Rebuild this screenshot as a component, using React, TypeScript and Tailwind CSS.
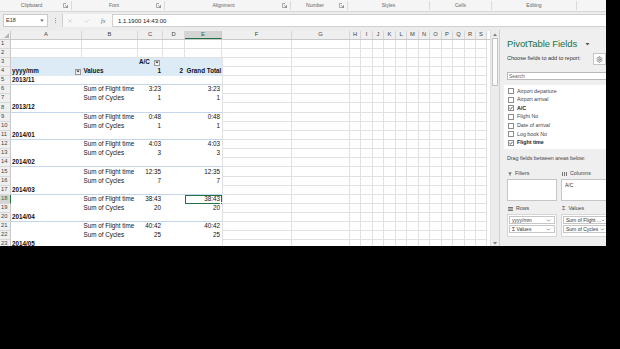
import React from "react";
import { Settings, X, Check, ChevronDown } from "lucide-react";

type Kind = "blank" | "colLabel" | "rowLabel" | "group" | "data";

interface SheetRow {
  n: number;
  kind: Kind;
  label?: string;
  c?: string;
  e?: string;
  tall?: boolean;
  selected?: boolean;
}

const COLS =
  "grid grid-cols-[11px_71px_56px_25px_22px_37px_70px_58px_11px_12px_11px_12px_11px_12px_11px_12px_11px_12px_11px_11px]";

const letters = ["A", "B", "C", "D", "E", "F", "G", "H", "I", "J", "K", "L", "M", "N", "O", "P", "Q", "R", "S"];

const rows: SheetRow[] = [
  { n: 1, kind: "blank" },
  { n: 2, kind: "blank" },
  { n: 3, kind: "colLabel" },
  { n: 4, kind: "rowLabel" },
  { n: 5, kind: "group", label: "2013/11" },
  { n: 6, kind: "data", label: "Sum of Flight time", c: "3:23", e: "3:23" },
  { n: 7, kind: "data", label: "Sum of Cycles", c: "1", e: "1" },
  { n: 8, kind: "group", label: "2013/12", tall: true },
  { n: 9, kind: "data", label: "Sum of Flight time", c: "0:48", e: "0:48" },
  { n: 10, kind: "data", label: "Sum of Cycles", c: "1", e: "1" },
  { n: 11, kind: "group", label: "2014/01" },
  { n: 12, kind: "data", label: "Sum of Flight time", c: "4:03", e: "4:03" },
  { n: 13, kind: "data", label: "Sum of Cycles", c: "3", e: "3" },
  { n: 14, kind: "group", label: "2014/02" },
  { n: 15, kind: "data", label: "Sum of Flight time", c: "12:35", e: "12:35", tall: true },
  { n: 16, kind: "data", label: "Sum of Cycles", c: "7", e: "7" },
  { n: 17, kind: "group", label: "2014/03" },
  { n: 18, kind: "data", label: "Sum of Flight time", c: "38:43", e: "38:43", selected: true },
  { n: 19, kind: "data", label: "Sum of Cycles", c: "20", e: "20" },
  { n: 20, kind: "group", label: "2014/04" },
  { n: 21, kind: "data", label: "Sum of Flight time", c: "40:42", e: "40:42" },
  { n: 22, kind: "data", label: "Sum of Cycles", c: "25", e: "25" },
  { n: 23, kind: "group", label: "2014/05" },
];

const fields: [string, boolean][] = [
  ["Airport departure", false],
  ["Airport arrival", false],
  ["A/C", true],
  ["Flight No", false],
  ["Date of arrival", false],
  ["Log book No", false],
  ["Flight time", true],
];

const ribbonGroups = [
  { name: "Clipboard", w: "w-[72px]", launcher: true },
  { name: "Font", w: "w-[93px]", launcher: true },
  { name: "Alignment", w: "w-[126px]", launcher: true },
  { name: "Number", w: "w-[57px]", launcher: true },
  { name: "Styles", w: "w-[82px]", launcher: false },
  { name: "Cells", w: "w-[62px]", launcher: false },
  { name: "Editing", w: "w-[85px]", launcher: false },
];

const Launcher = () => (
  <svg width="5" height="5" viewBox="0 0 5 5" className="mr-[3px] shrink-0">
    <path d="M0.5 0.5h2.5M0.5 0.5v4h4v-2.5" stroke="#8a8a8a" strokeWidth="0.7" fill="none" />
    <path d="M2 2l2.5 2.5M4.5 3v1.5H3" stroke="#8a8a8a" strokeWidth="0.7" fill="none" />
  </svg>
);

const FilterButton = () => (
  <div className="w-[6px] h-[6px] border border-[#9a9a9a] bg-[#f4f4f4] flex items-center justify-center shrink-0">
    <svg width="4" height="3" viewBox="0 0 4 3">
      <path d="M0.3 0.5h3.4L2 2.6z" fill="#333" />
    </svg>
  </div>
);

const Grid = () => <div className="border-r border-b border-[#e1e1e1]" />;

function PivotCells({ row }: { row: SheetRow }) {
  const txt = "flex items-center text-[6.3px] leading-none text-[#111] whitespace-nowrap overflow-hidden";
  if (row.kind === "blank") {
    return (
      <>
        <Grid />
        <Grid />
        <Grid />
        <Grid />
        <Grid />
      </>
    );
  }
  if (row.kind === "colLabel") {
    return (
      <>
        <div className="bg-[#ddebf7]" />
        <div className="bg-[#ddebf7]" />
        <div className={`${txt} bg-[#ddebf7] justify-between pl-[1px] pr-[3px] font-bold`}>
          <span>A/C</span>
          <FilterButton />
        </div>
        <div className="bg-[#ddebf7]" />
        <div className="bg-[#ddebf7]" />
      </>
    );
  }
  if (row.kind === "rowLabel") {
    return (
      <>
        <div className={`${txt} bg-[#ddebf7] justify-between pl-[1px] pr-[1px] font-bold`}>
          <span>yyyy/mm</span>
          <FilterButton />
        </div>
        <div className={`${txt} bg-[#ddebf7] pl-[1.5px] font-bold`}>Values</div>
        <div className={`${txt} bg-[#ddebf7] justify-end pr-[2px] font-bold`}>1</div>
        <div className={`${txt} bg-[#ddebf7] justify-end pr-[2px] font-bold`}>2</div>
        <div className={`${txt} bg-[#ddebf7] pl-[1.5px] font-bold`}>Grand Total</div>
      </>
    );
  }
  if (row.kind === "group") {
    return (
      <div className={`${txt} col-span-5 border-b border-[#c3d6ec] pl-[1px] font-bold`}>{row.label}</div>
    );
  }
  return (
    <>
      <div />
      <div className={`${txt} pl-[1.5px]`}>{row.label}</div>
      <div className={`${txt} justify-end pr-[2px]`}>{row.c}</div>
      <div />
      <div className={`${txt} relative justify-end pr-[2px]`}>
        {row.e}
        {row.selected && (
          <>
            <div className="absolute -top-[1px] -left-[1px] -right-[1px] -bottom-[1px] border-2 border-[#217346]" />
            <div className="absolute -bottom-[2px] -right-[2px] w-[4px] h-[4px] bg-[#217346] border border-white" />
          </>
        )}
      </div>
    </>
  );
}

function Row({ row }: { row: SheetRow }) {
  const h = row.tall ? "h-[10px]" : "h-[9px]";
  const head = row.selected
    ? "bg-[#d4d4d4] text-[#217346] border-r border-r-[#217346]"
    : "bg-[#efefef] text-[#444] border-r border-r-[#c8c8c8]";
  return (
    <div className={`${COLS} ${h}`}>
      <div className={`flex items-center pl-[1px] text-[5.8px] leading-none border-b border-b-[#d8d8d8] ${head}`}>
        {row.n}
      </div>
      <PivotCells row={row} />
      {letters.slice(5).map((l) => (
        <div
          key={l}
          className={
            l === "F" && row.kind !== "blank"
              ? "border-l border-r border-b border-[#e1e1e1]"
              : "border-r border-b border-[#e1e1e1]"
          }
        />
      ))}
    </div>
  );
}

function Sheet() {
  return (
    <div className="flex h-full bg-white">
      <div className="w-[490px] pt-[1px] bg-[#ececec] overflow-hidden">
        <div className="bg-white h-full">
          <div className={`${COLS} h-[9px] border-b border-[#c8c8c8]`}>
            <div className="bg-[#efefef] border-r border-[#c8c8c8] flex items-end justify-end p-[1px]">
              <svg width="5" height="5" viewBox="0 0 5 5">
                <path d="M5 0V5H0z" fill="#b5b5b5" />
              </svg>
            </div>
            {letters.map((l) => (
              <div
                key={l}
                className={
                  l === "E"
                    ? "flex items-center justify-center text-[5.8px] leading-none bg-[#d4d4d4] text-[#217346] border-r border-[#c8c8c8] border-b border-b-[#217346]"
                    : "flex items-center justify-center text-[5.8px] leading-none bg-[#efefef] text-[#444] border-r border-[#d6d6d6]"
                }
              >
                {l}
              </div>
            ))}
          </div>
          {rows.map((r) => (
            <Row key={r.n} row={r} />
          ))}
        </div>
      </div>
      <div className="w-[9px] pt-[1px] bg-[#ececec] flex flex-col border-l border-[#e0e0e0]">
        <div className="h-[7px] flex items-center justify-center">
          <svg width="4" height="3" viewBox="0 0 4 3">
            <path d="M0 3L2 0.5 4 3z" fill="#7a7a7a" />
          </svg>
        </div>
        <div className="mx-[1px] h-[48px] bg-[#fbfbfb] border border-[#c2c2c2]" />
        <div className="flex-1" />
        <div className="h-[6px] flex items-center justify-center">
          <svg width="4" height="3" viewBox="0 0 4 3">
            <path d="M0 0L2 2.5 4 0z" fill="#7a7a7a" />
          </svg>
        </div>
      </div>
    </div>
  );
}

const AreaItem = ({ text, icon }: { text: string; icon?: boolean }) => (
  <div className="h-[8px] mx-[1px] mt-[1px] bg-white border border-[#c6c6c6] flex items-center justify-between pl-[2px] pr-[3px] text-[5px] leading-none text-[#333] whitespace-nowrap">
    <span>{icon ? "Σ  " : ""}{text}</span>
    <ChevronDown size={5} strokeWidth={3} color="#555" />
  </div>
);

function Panel() {
  return (
    <div className="w-[107px] h-full bg-[#efefef] border-l border-[#d0d0d0] overflow-hidden">
      <div className="w-[118px] pl-[7px] pt-[8px] flex flex-col text-[#333]">
        <div className="h-[12px] flex items-center justify-between pr-[28px]">
          <span className="text-[9.5px] leading-none text-[#217346] tracking-[-0.1px]">PivotTable Fields</span>
          <svg width="5" height="4" viewBox="0 0 5 4">
            <path d="M0.5 1h4L2.5 3.5z" fill="#555" />
          </svg>
        </div>
        <div className="mt-[3px] h-[12px] flex items-center justify-between pr-[12px]">
          <span className="text-[5.5px] leading-none">Choose fields to add to report:</span>
          <div className="w-[13px] h-[12px] bg-white border border-[#c6c6c6] flex items-center justify-center">
            <Settings size={7} color="#555" strokeWidth={2} />
          </div>
        </div>
        <div className="mt-[7px] h-[8px] bg-white border border-[#b9b9b9] flex items-center pl-[1px] text-[5px] leading-none text-[#666]">
          Search
        </div>
        <div className="mt-[5px] -ml-[3px] h-[64px] bg-white pt-[2px] pl-[4px]">
          {fields.map(([name, on]) => (
            <div key={name} className="h-[8.6px] flex items-center gap-[3px]">
              <div className="w-[6px] h-[6px] border border-[#8c8c8c] bg-white flex items-center justify-center">
                {on && (
                  <svg width="4" height="4" viewBox="0 0 4 4">
                    <path d="M0.4 2.1l1.1 1.1L3.6 0.8" stroke="#333" strokeWidth="0.8" fill="none" />
                  </svg>
                )}
              </div>
              <span className={on ? "text-[5.3px] leading-none font-bold text-[#222]" : "text-[5.3px] leading-none text-[#444]"}>
                {name}
              </span>
            </div>
          ))}
        </div>
        <div className="mt-[6px] h-[8px] flex items-center text-[5.3px] leading-none text-[#444]">
          Drag fields between areas below:
        </div>
        <div className="mt-[7px] h-[8px] flex gap-[4px] text-[5.3px] leading-none text-[#444]">
          <div className="w-[50px] flex items-center gap-[3px] pl-[1px]">
            <svg width="4" height="4" viewBox="0 0 4 4">
              <path d="M0.2 0.4h3.6L2.4 2v1.8L1.6 3.4V2z" fill="#555" />
            </svg>
            Filters
          </div>
          <div className="w-[50px] flex items-center gap-[3px] pl-[1px]">
            <svg width="5" height="4" viewBox="0 0 5 4">
              <path d="M0.5 0v4M2.5 0v4M4.5 0v4" stroke="#555" strokeWidth="0.8" />
            </svg>
            Columns
          </div>
        </div>
        <div className="mt-[1px] h-[22px] flex gap-[4px]">
          <div className="w-[50px] bg-white border border-[#c6c6c6]" />
          <div className="w-[50px] bg-white border border-[#c6c6c6] pt-[1px]">
            <div className="h-[8px] mx-[1px] flex items-center pl-[2px] text-[5px] leading-none text-[#333]">A/C</div>
          </div>
        </div>
        <div className="mt-[4px] h-[8px] flex gap-[4px] text-[5.3px] leading-none text-[#444]">
          <div className="w-[50px] flex items-center gap-[3px] pl-[1px]">
            <svg width="5" height="4" viewBox="0 0 5 4">
              <path d="M0 0.5h5M0 2h5M0 3.5h5" stroke="#555" strokeWidth="0.8" />
            </svg>
            Rows
          </div>
          <div className="w-[50px] flex items-center gap-[3px] pl-[1px]">
            <span className="text-[5.5px]">Σ</span>
            Values
          </div>
        </div>
        <div className="mt-[1px] h-[23px] flex gap-[4px]">
          <div className="w-[50px] bg-white border border-[#d6d6d6]">
            <AreaItem text="yyyy/mm" />
            <AreaItem text="Values" icon />
          </div>
          <div className="w-[50px] bg-white border border-[#d6d6d6]">
            <AreaItem text="Sum of Flight ..." />
            <AreaItem text="Sum of Cycles" />
          </div>
        </div>
      </div>
    </div>
  );
}

export default function App() {
  return (
    <div className="w-[620px] h-[349px] bg-black font-['Liberation_Sans',Arial,sans-serif]">
      <div className="w-[606px] h-[246px] bg-white flex flex-col overflow-hidden">
        <div className="h-[12px] bg-[#f5f5f5] border-b border-[#d6d6d6] flex">
          {ribbonGroups.map((g) => (
            <div key={g.name} className={`${g.w} flex items-center border-r border-[#dadada] my-[1px]`}>
              <span className="flex-1 text-center text-[5px] leading-none text-[#666]">{g.name}</span>
              {g.launcher && <Launcher />}
            </div>
          ))}
        </div>
        <div className="h-[18px] bg-[#ececec] flex items-center pl-[3px] pb-[1px]">
          <div className="w-[45px] h-[13px] bg-white border border-[#c9c9c9] flex items-center justify-between pl-[2px] pr-[3px]">
            <span className="text-[5.5px] leading-none text-[#333]">E18</span>
            <svg width="4" height="3" viewBox="0 0 4 3">
              <path d="M0.2 0.5h3.6L2 2.7z" fill="#666" />
            </svg>
          </div>
          <div className="w-[14px] flex flex-col items-center gap-[1px]">
            <div className="w-[1px] h-[1px] bg-[#999]" />
            <div className="w-[1px] h-[1px] bg-[#999]" />
            <div className="w-[1px] h-[1px] bg-[#999]" />
          </div>
          <div className="w-[50px] h-[13px] bg-[#f7f7f7] border-l border-[#d0d0d0] flex items-center pl-[4px] gap-[11px]">
            <X size={6} color="#aaa" strokeWidth={1.5} />
            <Check size={6} color="#aaa" strokeWidth={1.5} />
            <span className="text-[6px] leading-none italic text-[#666] font-['Liberation_Serif',serif]">fx</span>
          </div>
          <div className="flex-1 h-[13px] bg-white border border-[#d0d0d0] border-r-0 flex items-center pl-[5px] text-[6px] leading-none text-[#222]">
            1.1.1900 14:43:00
          </div>
        </div>
        <div className="flex h-[216px]">
          <div className="w-[499px]">
            <Sheet />
          </div>
          <Panel />
        </div>
      </div>
    </div>
  );
}
